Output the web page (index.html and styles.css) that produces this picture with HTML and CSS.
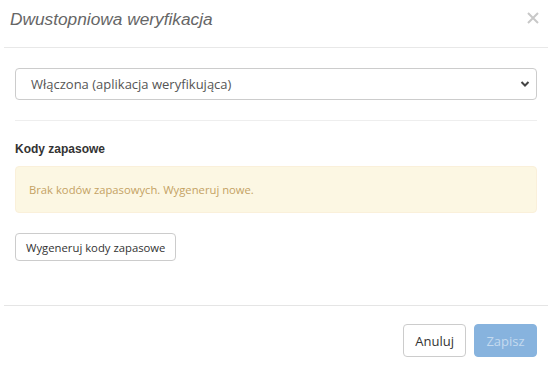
FILE: index.html
```html
<!DOCTYPE html>
<html lang="pl">
<head>
<meta charset="utf-8">
<link rel="stylesheet" href="styles.css">
</head>
<body>
<div class="modal">
  <div class="modal-header">
    <h4 class="modal-title">Dwustopniowa weryfikacja</h4>
    <svg class="close" width="12" height="12" viewBox="0 0 12 12"><path d="M1 1 L11 11 M11 1 L1 11" stroke="#c8c8c8" stroke-width="2"/></svg>
  </div>
  <div class="modal-body">
    <div class="select">
      <span class="select-text">Włączona (aplikacja weryfikująca)</span>
      <svg class="chevron" width="10" height="8" viewBox="0 0 10 8"><path d="M1.5 2 L5 5.5 L8.5 2" fill="none" stroke="#444" stroke-width="2"/></svg>
    </div>
    <hr class="sep">
    <div class="section-title">Kody zapasowe</div>
    <div class="alert">Brak kodów zapasowych. Wygeneruj nowe.</div>
    <button class="btn btn-sm">Wygeneruj kody zapasowe</button>
  </div>
  <div class="modal-footer">
    <button class="btn">Anuluj</button>
    <button class="btn btn-primary">Zapisz</button>
  </div>
</div>
</body>
</html>
```
FILE: styles.css
```css
html, body { margin: 0; padding: 0; background: #fff; }
body { font-family: "Open Sans", "Liberation Sans", sans-serif; color: #333; }
.modal { margin-left: 4px; width: 544px; }
.modal-header {
  border-bottom: 1px solid #e8e8e8;
  display: flex;
  align-items: center;
  justify-content: space-between;
  padding: 0 9px 0 6px;
  box-sizing: border-box;
  height: 48px;
}
.modal-title {
  margin: 0;
  font-family: "Liberation Sans", Arial, sans-serif;
  font-style: italic;
  font-weight: normal;
  font-size: 17.3px;
  color: #666;
  position: relative;
  top: -4px;
}
.close { display: block; position: relative; top: -6px; }
.modal-body { padding: 20px 11px 0 11px; }
.select {
  height: 32px;
  box-sizing: border-box;
  border: 1px solid #ccc;
  border-radius: 4px;
  display: flex;
  align-items: center;
  justify-content: space-between;
  padding: 0 6px 0 15px;
  font-size: 13px;
  color: #555;
}
.chevron { display: block; }
.sep { border: 0; border-top: 1px solid #eee; margin: 20px 0 0 0; }
.section-title {
  font-family: "Liberation Sans", Arial, sans-serif;
  font-weight: bold;
  font-size: 12px;
  color: #333;
  margin-top: 21px;
  line-height: 14px;
}
.alert {
  margin-top: 10px;
  height: 47px;
  box-sizing: border-box;
  background: #fcf7e3;
  border: 1px solid #faf0da;
  border-radius: 4px;
  padding: 0 13px;
  display: flex;
  align-items: center;
  font-size: 11.25px;
  color: #c4a264;
}
.btn {
  font-family: "Open Sans", "Liberation Sans", sans-serif;
  background: #fff;
  border: 1px solid #ccc;
  border-radius: 4px;
  color: #333;
  font-size: 13px;
  height: 33px;
  padding: 0 11px;
  cursor: pointer;
}
.btn-sm { margin-top: 20px; height: 28px; font-size: 11.3px; padding: 0 10px; }
.modal-footer {
  margin-top: 44px;
  border-top: 1px solid #e5e5e5;
  display: flex;
  justify-content: flex-end;
  gap: 8px;
  padding: 18px 11px 0 0;
}
.btn-primary {
  background: #87b3de;
  border-color: #87b3de;
  color: #c4daef;
  width: 63px;
}
```
